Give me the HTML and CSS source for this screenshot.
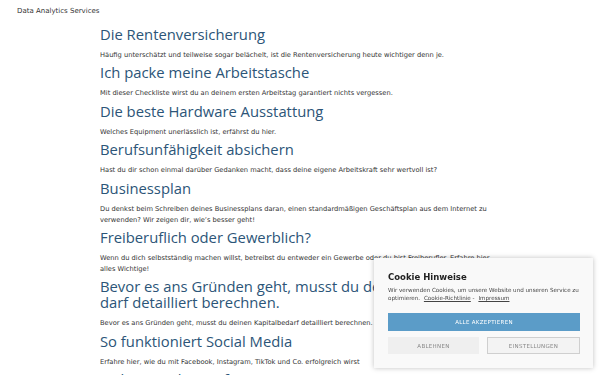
FILE: index.html
```html
<!DOCTYPE html>
<html lang="de">
<head>
<meta charset="utf-8">
<title>Data Analytics Services</title>
<link rel="stylesheet" href="styles.css">
</head>
<body>
<header class="site-header">Data Analytics Services</header>
<main class="content">
  <article class="post"><h2>Die Rentenversicherung</h2><p>Häufig unterschätzt und teilweise sogar belächelt, ist die Rentenversicherung heute wichtiger denn je.</p></article>
  <article class="post"><h2>Ich packe meine Arbeitstasche</h2><p>Mit dieser Checkliste wirst du an deinem ersten Arbeitstag garantiert nichts vergessen.</p></article>
  <article class="post"><h2>Die beste Hardware Ausstattung</h2><p>Welches Equipment unerlässlich ist, erfährst du hier.</p></article>
  <article class="post"><h2>Berufsunfähigkeit absichern</h2><p>Hast du dir schon einmal darüber Gedanken macht, dass deine eigene Arbeitskraft sehr wertvoll ist?</p></article>
  <article class="post"><h2>Businessplan</h2><p>Du denkst beim Schreiben deines Businessplans daran, einen standardmäßigen Geschäftsplan aus dem Internet zu verwenden? Wir zeigen dir, wie’s besser geht!</p></article>
  <article class="post"><h2>Freiberuflich oder Gewerblich?</h2><p>Wenn du dich selbstständig machen willst, betreibst du entweder ein Gewerbe oder du bist Freiberufler. Erfahre hier alles Wichtige!</p></article>
  <article class="post"><h2>Bevor es ans Gründen geht, musst du deinen Kapitalbe&shy;darf detailliert berechnen.</h2><p>Bevor es ans Gründen geht, musst du deinen Kapitalbedarf detailliert berechnen.</p></article>
  <article class="post"><h2>So funktioniert Social Media</h2><p>Erfahre hier, wie du mit Facebook, Instagram, TikTok und Co. erfolgreich wirst</p></article>
  <article class="post"><h2>Online-Marketing für Einsteiger</h2><p>Alles, was du wissen musst.</p></article>
</main>
<div class="cookie-box">
  <div class="cookie-title">Cookie Hinweise</div>
  <p class="cookie-text">Wir verwenden Cookies, um unsere Website und unseren Service zu optimieren. <a href="#">Cookie-Richtlinie</a> - <a href="#">Impressum</a></p>
  <button class="btn btn-accept">ALLE AKZEPTIEREN</button>
  <div class="btn-row">
    <button class="btn btn-deny">ABLEHNEN</button>
    <button class="btn btn-settings">EINSTELLUNGEN</button>
  </div>
</div>
</body>
</html>
```
FILE: styles.css
```css
html, body { margin: 0; padding: 0; background: #fff; }
body { font-family: "DejaVu Sans", sans-serif; color: #333; overflow: hidden; height: 375px; }
.site-header { font-size: 7px; line-height: 10px; padding: 6px 0 0 17px; color: #333; }
.content { width: 392px; margin: 10px 0 0 100px; }
.post h2 { margin: 0; font-family: "Open Sans", sans-serif; font-weight: 500; font-size: 14.8px; line-height: 16px; color: #2c5578; hyphens: manual; }
.post p { margin: 8px 0 3.4px; font-size: 6.7px; line-height: 11px; color: #333; }
.cookie-box { position: fixed; left: 374px; top: 258px; width: 219px; height: 110px; box-sizing: border-box; padding: 13px 13px 0 14px; background: #f9f9f9; box-shadow: 0 0 5px rgba(0,0,0,0.25); }
.cookie-title { font-size: 8.5px; font-weight: bold; color: #222; line-height: 12px; }
.cookie-text { margin: 3px 0 0; font-size: 5.6px; line-height: 8px; color: #444; }
.cookie-text a { color: #444; margin-left: 2px; }
.btn { display: block; font-family: "DejaVu Sans", sans-serif; font-size: 5.5px; letter-spacing: 0.3px; border: 0; cursor: pointer; }
.btn-accept { width: 100%; height: 18px; margin-top: 11px; background: #5b9cc8; color: #fff; }
.btn-row { display: flex; gap: 8px; margin-top: 6px; }
.btn-row .btn { flex: 1; height: 17px; color: #888; }
.btn-deny { background: #efefef; }
.btn-settings { background: #f3f3f3; border: 1px solid #cfcfcf; }
```
